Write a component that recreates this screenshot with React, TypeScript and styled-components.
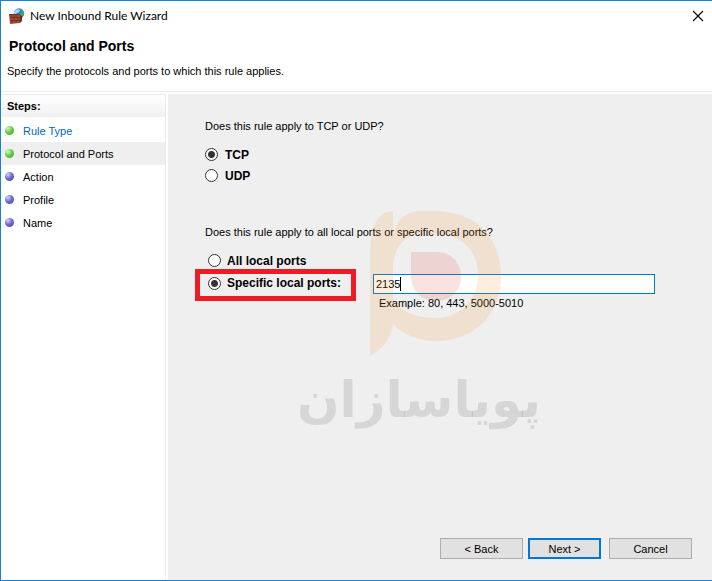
import React, { useState } from "react";
import styled, { createGlobalStyle, css } from "styled-components";

const Global = createGlobalStyle`
  *, *::before, *::after { box-sizing: border-box; }
  html, body, #root { height: 100%; margin: 0; }
  body {
    background: #fff;
    color: #000;
    font: 11px/16px "Liberation Sans", Arial, sans-serif;
  }
`;

const Dialog = styled.div`
  display: flex;
  flex-direction: column;
  min-height: 100%;
  border: 1px solid #1581d9;
  border-right: 0;
  background: #fff;
`;

const TitleBar = styled.header`
  display: flex;
  align-items: center;
  gap: 5px;
  height: 29px;
  padding: 0 8px;
`;

const Title = styled.span`
  flex: 1;
  font: 12px/16px Lato, "Open Sans", sans-serif;
`;

const CloseButton = styled.button`
  display: grid;
  place-items: center;
  width: 12px;
  height: 12px;
  padding: 0;
  border: 0;
  background: none;
`;

const Intro = styled.section`
  padding: 6px 6px 12px;
  border-bottom: 1px solid #ececec;
`;

const Heading = styled.h1`
  margin: 0 0 7px;
  padding-left: 2px;
  font: bold 14px/20px "Liberation Sans", Arial, sans-serif;
`;

const Lead = styled.p`
  margin: 0;
`;

const Body = styled.div`
  display: flex;
  flex: 1;
  gap: 2px;
  padding-top: 2px;
`;

const Steps = styled.nav`
  flex: 0 0 165px;
  border: 1px solid #ececec;
  border-width: 1px 1px 0 0;
`;

const StepsTitle = styled.h2`
  margin: 0;
  padding: 0 6px;
  background: linear-gradient(#fff, #f0f0f0);
  font: bold 11px/22px "Liberation Sans", Arial, sans-serif;
`;

const StepList = styled.ul`
  margin: 2px 0 0;
  padding: 0;
  list-style: none;
`;

const Step = styled.li<{ $current?: boolean }>`
  display: flex;
  align-items: center;
  gap: 9px;
  height: 23px;
  padding-left: 4px;
  background: ${(p) => (p.$current ? "#efefef" : "transparent")};
`;

const Dot = styled.span<{ $done?: boolean }>`
  width: 9px;
  height: 9px;
  border-radius: 50%;
  background: ${(p) =>
    p.$done
      ? "radial-gradient(circle at 32% 28%, #d4f5cc, #62cb3e 48%, #43a62c)"
      : "radial-gradient(circle at 32% 28%, #d5d5f6, #6a66cc 48%, #504ba6)"};
`;

const StepLink = styled.a`
  color: #0066cc;
  text-decoration: none;
`;

const Main = styled.main`
  position: relative;
  display: flex;
  flex: 1;
  flex-direction: column;
  min-width: 0;
  padding: 24px 20px 21px 37px;
  background: #efefef;
`;

const Group = styled.fieldset`
  min-width: 0;
  margin: 0 0 38px;
  padding: 0;
  border: 0;
`;

const Question = styled.legend`
  margin-bottom: 10px;
  padding: 0;
`;

const RadioLabel = styled.label<{ $tight?: boolean }>`
  display: flex;
  align-items: center;
  gap: ${(p) => (p.$tight ? 6 : 7)}px;
  height: 21px;
  font: bold 12px/16px "Liberation Sans", Arial, sans-serif;
`;

const Radio = styled.input`
  appearance: none;
  flex: none;
  width: 13px;
  height: 13px;
  margin: 0;
  border: 1px solid #333;
  border-radius: 50%;
  background: #fff;
  &:checked {
    background: radial-gradient(circle, #333 0 3px, #fff 4px);
  }
`;

const PortOptions = styled.div`
  padding-left: 3px;
`;

const PortRow = styled.div`
  display: flex;
  align-items: flex-start;
  margin-right: 37px;
`;

const Highlight = styled.div`
  display: flex;
  align-items: center;
  flex: none;
  width: 161px;
  height: 32px;
  margin: -2px 17px 0 -13px;
  padding: 0 8px 4px;
  border: 5px solid #ed1c24;
`;

const PortField = styled.div`
  position: relative;
  flex: 1;
  min-width: 0;
  margin-top: 3px;
`;

const PortInput = styled.input`
  display: block;
  width: 100%;
  height: 20px;
  padding: 0 2px;
  border: 1px solid #0078d7;
  outline: 0;
  background: #fff;
  color: #000;
  caret-color: transparent;
  font: inherit;
`;

const Caret = styled.span`
  position: absolute;
  top: 3px;
  left: 1px;
  height: 14px;
  border-left: 1px solid #000;
`;

const Hint = styled.p`
  margin: 1px 0 0;
  padding-left: 6px;
`;

const Watermark = styled.div`
  position: absolute;
  top: 116px;
  left: 125px;
  width: 252px;
  pointer-events: none;
`;

const Mark = styled.svg`
  display: block;
  width: 132px;
  height: 146px;
  margin-left: 77px;
`;

const Wordmark = styled.div`
  color: rgba(0, 0, 0, 0.1);
  font: bold 50px/88px "DejaVu Sans", sans-serif;
  text-align: center;
  white-space: nowrap;
`;

const Actions = styled.footer`
  display: flex;
  justify-content: flex-end;
  margin-top: auto;
`;

const Button = styled.button<{ $primary?: boolean }>`
  width: 83px;
  height: 21px;
  padding: 0;
  border: 1px solid #adadad;
  background: #e1e1e1;
  color: #000;
  font: inherit;
  ${(p) =>
    p.$primary &&
    css`
      width: 73px;
      margin: 0 8px 0 5px;
      border: 2px solid #0078d7;
    `}
`;

const FirewallIcon = () => (
  <svg width="16" height="16" viewBox="0 0 16 16" aria-hidden="true">
    <circle cx="10" cy="5.5" r="5.2" fill="#2f86d8" />
    <path d="M6 2.5Q9 .5 11 2Q10 5 8 5L6 7L5 5Z" fill="#a4dcf5" />
    <path d="M12 1Q15 3 15 6L13 9L11 7L13 5Z" fill="#50aa32" />
    <path d="M0 6H11V15L1 16Z" fill="#a04a37" />
    <path d="M0 6.5H11M1 9.5H11M1 12.5H11M3 6V9M7 6V9M5 9V12M9 9V12M3 12V15M7 12V15" stroke="#6b261b" strokeWidth=".7" />
    <path d="M11 7L13 8V13L11 15Z" fill="#73291e" />
  </svg>
);

const steps = [
  { label: "Rule Type", done: true, link: true },
  { label: "Protocol and Ports", done: true, current: true },
  { label: "Action" },
  { label: "Profile" },
  { label: "Name" },
];

export default function App() {
  const [protocol, setProtocol] = useState("TCP");
  const [scope, setScope] = useState("specific");
  const [ports, setPorts] = useState("2135");

  return (
    <>
      <Global />
      <Dialog role="dialog" aria-labelledby="title">
        <TitleBar>
          <FirewallIcon />
          <Title id="title">New Inbound Rule Wizard</Title>
          <CloseButton aria-label="Close">
            <svg width="12" height="12" viewBox="0 0 12 12">
              <path d="M1 1L11 11M11 1L1 11" stroke="#000" strokeWidth="1.1" />
            </svg>
          </CloseButton>
        </TitleBar>
        <Intro>
          <Heading>Protocol and Ports</Heading>
          <Lead>Specify the protocols and ports to which this rule applies.</Lead>
        </Intro>
        <Body>
          <Steps>
            <StepsTitle>Steps:</StepsTitle>
            <StepList>
              {steps.map((s) => (
                <Step key={s.label} $current={s.current}>
                  <Dot $done={s.done} />
                  {s.link ? <StepLink href="#rule-type">{s.label}</StepLink> : s.label}
                </Step>
              ))}
            </StepList>
          </Steps>
          <Main>
            <Group>
              <Question>Does this rule apply to TCP or UDP?</Question>
              {["TCP", "UDP"].map((name) => (
                <RadioLabel key={name}>
                  <Radio type="radio" name="protocol" checked={protocol === name} onChange={() => setProtocol(name)} />
                  {name}
                </RadioLabel>
              ))}
            </Group>
            <Group>
              <Question>Does this rule apply to all local ports or specific local ports?</Question>
              <PortOptions>
                <RadioLabel $tight>
                  <Radio type="radio" name="scope" checked={scope === "all"} onChange={() => setScope("all")} />
                  All local ports
                </RadioLabel>
                <PortRow>
                  <Highlight>
                    <RadioLabel $tight>
                      <Radio type="radio" name="scope" checked={scope === "specific"} onChange={() => setScope("specific")} />
                      Specific local ports:
                    </RadioLabel>
                  </Highlight>
                  <PortField>
                    <PortInput
                      aria-label="Specific local ports"
                      aria-describedby="ports-hint"
                      value={ports}
                      autoFocus
                      onChange={(e) => setPorts(e.target.value)}
                    />
                    <Caret aria-hidden="true" style={{ marginLeft: `calc(${ports.length}ch + 2px)` }} />
                    <Hint id="ports-hint">Example: 80, 443, 5000-5010</Hint>
                  </PortField>
                </PortRow>
              </PortOptions>
            </Group>
            <Watermark>
              <Mark viewBox="0 0 132 146" aria-hidden="true">
                <path
                  d="M0 146V42Q1 1 23 1V114Q20 135 0 146ZM23 114V91Q38 108 65 108C91 108 108 90 108 65S91 24 65 24H53Q28 24 23 53V24Q29 1 52 1H65C106 1 131 28 131 66S105 131 66 131Q40 131 23 114Z"
                  fill="#f08c1e"
                  fillOpacity=".15"
                />
                <path d="M41 42H66C82 42 91 53 91 67S80 91 66 91S41 81 41 66Z" fill="#e03c31" fillOpacity=".15" />
              </Mark>
              <Wordmark lang="fa" dir="rtl">پویاسازان</Wordmark>
            </Watermark>
            <Actions>
              <Button type="button">&lt; Back</Button>
              <Button type="button" $primary>Next &gt;</Button>
              <Button type="button">Cancel</Button>
            </Actions>
          </Main>
        </Body>
      </Dialog>
    </>
  );
}
